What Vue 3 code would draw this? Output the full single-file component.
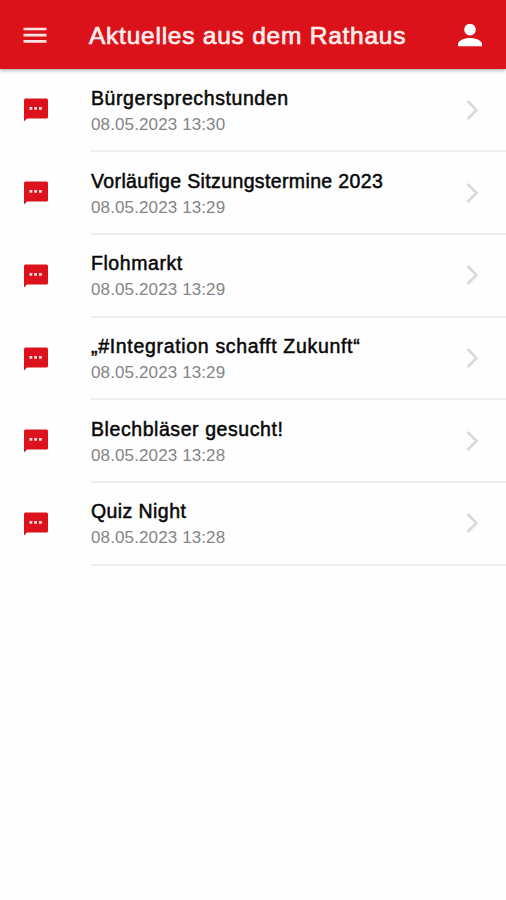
<template>
  <div class="news">
    <header class="news__header">
      <button class="news__menu" aria-label="Menü">
        <svg width="24" height="18" viewBox="0 0 24 18">
          <path d="M.5 2h23M.5 8.200h23M.5 14.400h23" stroke="#fff" stroke-opacity=".88" stroke-width="2.700" />
        </svg>
      </button>
      <h1 class="news__title">Aktuelles aus dem Rathaus</h1>
      <button class="news__account" aria-label="Konto">
        <svg width="26" height="24" viewBox="0 0 26 24">
          <circle cx="13" cy="5.6" r="5.8" fill="#fff" />
          <path d="M1 22.200v-1.800C1 16.500 7 14 13 14s12 2.500 12 6.400v1.800z" fill="#fff" />
        </svg>
      </button>
    </header>

    <ul class="news__list">
      <li v-for="item in items" :key="item.title" class="news-item">
        <svg class="news-item__icon" width="26" height="25" viewBox="0 0 26 25">
          <path d="M2.500 .4h21q1.500 0 1.500 1.500v17q0 1.500-1.500 1.500H4L1 23.400V1.900q0-1.500 1.500-1.500z" fill="#dc121c" />
          <path d="M6.500 9h2.800v2.800H6.500zM11.200 9H14v2.800h-2.800zM16 9h2.800v2.800H16z" fill="#fff" fill-opacity=".85" />
        </svg>
        <div class="news-item__body">
          <div class="news-item__text">
            <h2 class="news-item__title" :style="{ letterSpacing: item.tracking + 'px' }">{{ item.title }}</h2>
            <time class="news-item__date">{{ item.date }}</time>
          </div>
          <svg class="news-item__chevron" width="14" height="22" viewBox="0 0 14 22">
            <path d="M1.500 2l9 9-9 9" fill="none" stroke="#d9d9d9" stroke-width="2.600" />
          </svg>
        </div>
      </li>
    </ul>
  </div>
</template>

<script setup>
// tracking: letter spacing of the headline in px
const items = [
  { title: 'Bürgersprechstunden', date: '08.05.2023 13:30', tracking: 0.59 },
  { title: 'Vorläufige Sitzungstermine 2023', date: '08.05.2023 13:29', tracking: 0.37 },
  { title: 'Flohmarkt', date: '08.05.2023 13:29', tracking: 0.56 },
  { title: '„#Integration schafft Zukunft“', date: '08.05.2023 13:29', tracking: 0.68 },
  { title: 'Blechbläser gesucht!', date: '08.05.2023 13:28', tracking: 0.57 },
  { title: 'Quiz Night', date: '08.05.2023 13:28', tracking: 0.42 }
]
</script>

<style>
body {
  margin: 0;
  background: #fefefe;
}
</style>

<style scoped>
.news {
  min-height: 100vh;
  font-family: "Liberation Sans", Arial, sans-serif;
  background: #fefefe;
}

.news__header {
  position: relative;
  display: flex;
  align-items: center;
  box-sizing: border-box;
  height: 69px;
  padding: 2px 23px 0;
  background: #dc121b;
  box-shadow: 0 1px 4px rgba(0, 0, 0, 0.4);
}

.news__menu,
.news__account {
  display: flex;
  padding: 0;
  border: 0;
  background: none;
}

.news__title {
  flex: 1;
  margin: 0 0 0 42px;
  font-size: 24.5px;
  font-weight: 400;
  line-height: 32px;
  letter-spacing: 0.76px;
  white-space: nowrap;
  color: #ffeeec;
  -webkit-text-stroke: 0.7px #ffeeec;
}

.news__list {
  margin: 0;
  padding: 0;
  list-style: none;
}

.news-item {
  display: flex;
  height: 82.7px;
  padding-left: 23px;
}

.news-item:first-child {
  height: 83.4px;
}

.news-item__icon {
  align-self: center;
  margin-right: 42px;
}

.news-item__body {
  flex: 1;
  display: flex;
  align-items: center;
  justify-content: space-between;
  padding-right: 26px;
  border-bottom: 2px solid #eee;
}

.news-item__text {
  padding-top: 3px;
}

.news-item__title {
  margin: 0;
  font-size: 19.5px;
  font-weight: 400;
  line-height: 26px;
  white-space: nowrap;
  color: #080808;
  -webkit-text-stroke: 0.5px #080808;
}

.news-item__date {
  display: block;
  font-size: 17px;
  line-height: 27px;
  letter-spacing: 0.12px;
  color: #858585;
}
</style>
